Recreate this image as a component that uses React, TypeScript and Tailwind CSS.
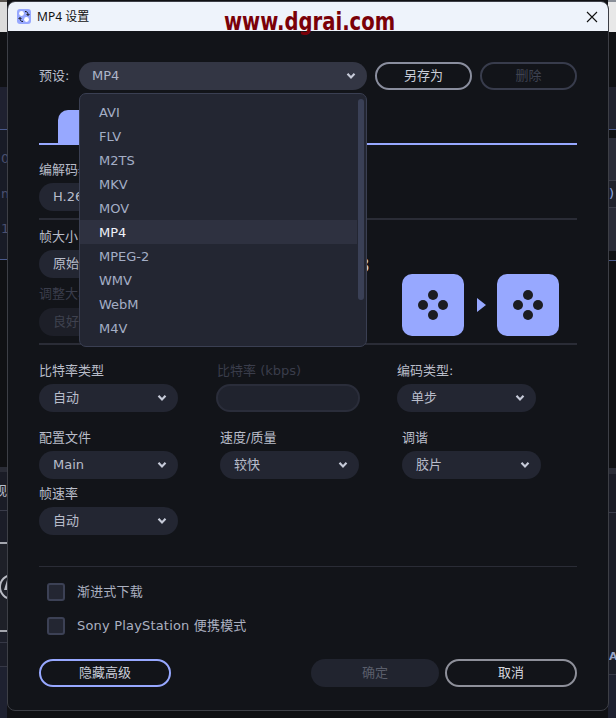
import React from "react";

const sans = "font-['DejaVu_Sans','Noto_Sans_CJK_SC',sans-serif]";

function Chevron({ className = "" }: { className?: string }) {
  return (
    <svg width="10" height="8" viewBox="0 0 10 8" className={className} fill="none">
      <path d="M1.5 1.8 L5 5.4 L8.5 1.8" stroke="#c6cad8" strokeWidth="2.2" />
    </svg>
  );
}

function Select({
  text,
  wClass = "w-[139px]",
  bright = false,
  dim = false,
}: {
  text: string;
  wClass?: string;
  bright?: boolean;
  dim?: boolean;
}) {
  return (
    <div
      className={`${wClass} h-[28px] shrink-0 rounded-full flex items-center justify-between pr-[11px] text-[13px] ${
        bright ? "bg-[#333644] text-[#aeb5c9] pl-[13px]" : dim ? "bg-[#1d1f28] text-[#3f424f] pl-[14px]" : "bg-[#232632] text-[#b9bdcb] pl-[14px]"
      }`}
    >
      <span className="whitespace-nowrap">{text}</span>
      {!dim && <Chevron />}
    </div>
  );
}

function Label({ text, dim = false, className = "" }: { text: string; dim?: boolean; className?: string }) {
  return (
    <div className={`h-[18px] leading-[20px] text-[13px] whitespace-nowrap ${dim ? "text-[#3a3d4b]" : "text-[#b9bdc9]"} ${className}`}>
      {text}
    </div>
  );
}

function Field({ label, select, className = "" }: { label: string; select: string; className?: string }) {
  return (
    <div className={`w-[139px] shrink-0 ${className}`}>
      <Label text={label} />
      <div className="mt-[5px]">
        <Select text={select} />
      </div>
    </div>
  );
}

function Tile() {
  return (
    <div className="w-[62px] h-[62px] rounded-[10px] bg-[#97a8ff] flex items-center justify-center">
      <svg width="32" height="32" viewBox="0 0 32 32" fill="#1c1d22">
        <circle cx="16" cy="6" r="5" />
        <circle cx="6" cy="16" r="5" />
        <circle cx="26" cy="16" r="5" />
        <circle cx="16" cy="26" r="5" />
      </svg>
    </div>
  );
}

function Check({ children }: { children: React.ReactNode }) {
  return (
    <div className="flex items-center h-[18px] ml-[8px]">
      <div className="w-[18px] h-[18px] rounded-[3px] bg-[#232632] border-2 border-[#3c4155]" />
      <span className="ml-[12px] text-[13px] tracking-[0.18px] text-[#aab0c0] whitespace-nowrap">{children}</span>
    </div>
  );
}

const items = ["AVI", "FLV", "M2TS", "MKV", "MOV", "MP4", "MPEG-2", "WMV", "WebM", "M4V"];

function Band({ h, c, children }: { h: string; c: string; children?: React.ReactNode }) {
  return (
    <div className={`${h} ${c} w-full overflow-hidden shrink-0 relative`}>{children}</div>
  );
}

export default function App() {
  return (
    <div className={`relative w-[616px] h-[718px] overflow-hidden bg-[#101114] ${sans}`}>
      {/* desktop behind the dialog */}
      <div className="absolute inset-0 flex justify-between">
        <div className="w-[7px] h-full flex flex-col text-[13px] leading-none text-[#4a5070]">
          <Band h="h-[2px]" c="bg-[#5a5550]" />
          <Band h="h-[30px]" c="bg-[#dcdcdc]" />
          <Band h="h-[55px]" c="bg-[#101114]" />
          <Band h="h-[42px]" c="bg-[#1f2130]" />
          <Band h="h-[1px]" c="bg-[#4a5a8c]" />
          <Band h="h-[129px]" c="bg-[#181b26]">
            <div className="flex flex-col gap-[22px] pt-[22px] pl-[1px]">
              <span>0</span>
              <span>m</span>
              <span>1</span>
            </div>
          </Band>
          <Band h="h-[1px]" c="bg-[#4a5a8c]" />
          <Band h="h-[207px]" c="bg-[#101114]" />
          <Band h="h-[5px]" c="bg-[#2a2c36]" />
          <Band h="h-[38px]" c="bg-[#1a1c26]">
            <span className="block pt-[12px] text-[#b9bdc9] -ml-[6px] whitespace-nowrap">观:</span>
          </Band>
          <Band h="h-[1px]" c="bg-[#3a3c4a]" />
          <Band h="h-[31px]" c="bg-[#1b1d28]" />
          <Band h="h-[2px]" c="bg-[#a4a6ae]" />
          <Band h="h-[86px]" c="bg-[#1e2028]">
            <svg width="7" height="86" viewBox="0 0 7 86" fill="none">
              <circle cx="12" cy="43" r="12" stroke="#b9bbc4" strokeWidth="2" />
              <path d="M7 36 L4 46 L7 46 Z" fill="#b9bbc4" />
            </svg>
          </Band>
          <Band h="h-[2px]" c="bg-[#a4a6ae]" />
          <Band h="h-[10px]" c="bg-[#1d1f2a]" />
          <Band h="h-[1px]" c="bg-[#363846]" />
          <Band h="h-[23px]" c="bg-[#1c1e29]" />
          <Band h="h-[1px]" c="bg-[#363846]" />
          <Band h="h-[51px]" c="bg-[#1e2130]" />
        </div>
        <div className="w-[8px] h-full flex flex-col text-[13px] leading-none">
          <Band h="h-[2px]" c="bg-[#8a8f98]" />
          <Band h="h-[30px]" c="bg-[#e8e8e8]" />
          <Band h="h-[55px]" c="bg-[#101114]" />
          <Band h="h-[42px]" c="bg-[#20222e]" />
          <Band h="h-[1px]" c="bg-[#4a5a8c]" />
          <Band h="h-[8px]" c="bg-[#101114]" />
          <Band h="h-[42px]" c="bg-[#2a2c38]" />
          <Band h="h-[1px]" c="bg-[#3c3e4a]" />
          <Band h="h-[26px]" c="bg-[#20222c]">
            <span className="block pt-[6px] pl-[1px] text-[#8fa8e0]">)</span>
          </Band>
          <Band h="h-[1px]" c="bg-[#3c3e4a]" />
          <Band h="h-[43px]" c="bg-[#2a2c38]" />
          <Band h="h-[9px]" c="bg-[#101114]" />
          <Band h="h-[1px]" c="bg-[#4a5a8c]" />
          <Band h="h-[207px]" c="bg-[#101114]" />
          <Band h="h-[6px]" c="bg-[#2a2c36]" />
          <Band h="h-[38px]" c="bg-[#1a1c26]" />
          <Band h="h-[1px]" c="bg-[#3a3c4a]" />
          <Band h="h-[136px]" c="bg-[#1c1e28]" />
          <Band h="h-[25px]" c="bg-[#1c1e28]">
            <span className="block text-[11px] font-bold text-[#9aa6c8] pl-[1px] pt-[2px] whitespace-nowrap">Ar</span>
          </Band>
          <Band h="h-[1px]" c="bg-[#363846]" />
          <Band h="h-[50px]" c="bg-[#1e2130]" />
        </div>
      </div>

      {/* dialog window */}
      <div className="absolute left-[7px] top-[1px] w-[602px] h-[710px] rounded-[8px] border border-[#3d3f46] bg-[#121419] overflow-hidden">
        <div className="h-[29px] bg-[#eef3fb] flex items-center pl-[9px] pr-[10px] -mt-[1px] box-content pt-[1px]">
          <svg width="14" height="15" viewBox="0 0 14 15">
            <rect width="14" height="15" rx="3" fill="#97a8ff" />
            <circle cx="4.5" cy="4.5" r="2.4" fill="#fff" />
            <circle cx="9.5" cy="10.5" r="2.4" fill="#fff" />
            <path d="M8 2.5 C10.5 2.5 11 4 11 6 M9.6 5 L11 6.6 L12.4 5" stroke="#111" strokeWidth="1" fill="none" />
            <path d="M6 12.5 C3.5 12.5 3 11 3 9 M1.6 10 L3 8.4 L4.4 10" stroke="#111" strokeWidth="1" fill="none" />
          </svg>
          <span className="ml-[6px] text-[12px] text-[#111] font-['Noto_Sans','Noto_Sans_CJK_SC',sans-serif]">MP4 设置</span>
          <svg className="ml-auto" width="12" height="12" viewBox="0 0 12 12" stroke="#111" strokeWidth="1.1">
            <path d="M1 1 L11 11 M11 1 L1 11" />
          </svg>
        </div>

        <div className="pl-[31px] pr-[31px]">
          {/* preset */}
          <div className="flex items-center mt-[31px] h-[28px]">
            <span className="w-[40px] text-[13px] text-[#b9bdc9] whitespace-nowrap">预设:</span>
            <Select text="MP4" wClass="w-[288px]" bright />
            <div className="ml-[8px] w-[97px] h-[28px] rounded-full border-2 border-[#8a8e9e] flex items-center justify-center text-[13px] text-[#c9cdd8]">
              另存为
            </div>
            <div className="ml-[8px] w-[97px] h-[28px] rounded-full border-2 border-[#383c4c] flex items-center justify-center text-[13px] text-[#3f4352]">
              删除
            </div>
          </div>

          {/* tabs */}
          <div className="mt-[20px] h-[35px] border-b-2 border-[#97a8ff] flex">
            <div className="ml-[19px] w-[90px] h-full bg-[#97a8ff] rounded-t-[10px]" />
          </div>

          {/* codec */}
          <Label text="编解码器:" className="mt-[15px]" />
          <div className="mt-[5px]">
            <Select text="H.264" />
          </div>
          <div className="mt-[7px] h-[2px] bg-[#2a2c36]" />

          {/* frame */}
          <div className="flex">
            <div className="w-[139px] shrink-0">
              <Label text="帧大小" className="mt-[7px]" />
              <div className="mt-[5px]">
                <Select text="原始" />
              </div>
              <Label text="调整大小" dim className="mt-[6px]" />
              <div className="mt-[6px]">
                <Select text="良好" dim />
              </div>
            </div>
            <span className="ml-[179px] mt-[33px] h-[24px] text-[20px] leading-[24px] text-[#c9cdd8]">8</span>
            <div className="ml-auto mr-[18px] mt-[54px] flex items-center">
              <Tile />
              <svg className="ml-[13px] mr-[11px]" width="9" height="14" viewBox="0 0 9 14" fill="#97a8ff">
                <path d="M0 0 L9 7 L0 14 Z" />
              </svg>
              <Tile />
            </div>
          </div>
          <div className="mt-[7px] h-[2px] bg-[#2a2c36]" />

          {/* row 1 */}
          <div className="flex mt-[16px]">
            <Field label="比特率类型" select="自动" />
            <div className="w-[144px] ml-[38px] shrink-0">
              <Label text="比特率 (kbps)" dim className="pl-[1px]" />
              <div className="mt-[5px] h-[28px] rounded-full bg-[#20232e] border-2 border-[#2a2d3a]" />
            </div>
            <Field label="编码类型:" select="单步" className="ml-[37px]" />
          </div>

          {/* row 2 */}
          <div className="flex mt-[16px]">
            <Field label="配置文件" select="Main" />
            <Field label="速度/质量" select="较快" className="ml-[42px]" />
            <Field label="调谐" select="胶片" className="ml-[43px]" />
          </div>

          {/* row 3 */}
          <div className="mt-[5px]">
            <Field label="帧速率" select="自动" />
          </div>

          <div className="mt-[31px] h-[1px] bg-[#2a2c36]" />

          <div className="mt-[16px]">
            <Check>渐进式下载</Check>
          </div>
          <div className="mt-[16px]">
            <Check>Sony PlayStation 便携模式</Check>
          </div>

          {/* footer */}
          <div className="mt-[24px] flex items-center text-[13px]">
            <div className="w-[132px] h-[28px] rounded-full border-2 border-[#97a8ff] flex items-center justify-center text-[#c9cdd8]">
              隐藏高级
            </div>
            <div className="ml-auto w-[128px] h-[28px] rounded-full bg-[#21242f] flex items-center justify-center text-[#5a5e6b]">
              确定
            </div>
            <div className="ml-[6px] w-[132px] h-[28px] rounded-full border-2 border-[#8e909a] flex items-center justify-center text-[#d6d8de]">
              取消
            </div>
          </div>
        </div>

        {/* open dropdown */}
        <div className="absolute left-[71px] top-[91px] w-[288px] h-[254px] rounded-[7px] border border-[#3a3f52] bg-[#232632] pt-[6px]">
          <div className="w-[277px]">
            {items.map((t) => (
              <div
                key={t}
                className={`h-[24px] leading-[26px] pl-[19px] text-[13px] ${
                  t === "MP4" ? "bg-[#2e3140] text-[#f0f2f8]" : "text-[#a4aec6]"
                }`}
              >
                {t}
              </div>
            ))}
          </div>
          <div className="absolute right-[2px] top-[5px] w-[6px] h-[201px] rounded-full bg-[#3a4056]" />
        </div>
      </div>

      {/* watermark */}
      <div className="absolute left-[224px] top-[10px] text-[19.6px] leading-[28px] font-bold text-[#7a0008] whitespace-nowrap font-['DejaVu_Sans',sans-serif] scale-y-[1.25] origin-[0_21px]">
        www.dgrai.com
      </div>
    </div>
  );
}
